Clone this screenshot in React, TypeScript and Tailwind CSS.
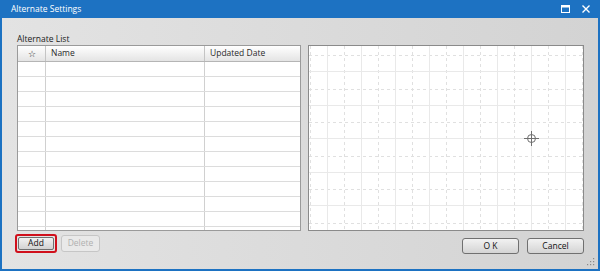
import React from "react";

const font = { fontFamily: '"Open Sans", "Noto Sans", Arial, sans-serif' };

function Grid() {
  const vSolid: number[] = [];
  const vDash: number[] = [];
  for (let x = 18; x < 274; x += 34) vSolid.push(x);
  for (let x = 1; x < 274; x += 34) vDash.push(x);
  const hSolid: number[] = [];
  const hDash: number[] = [];
  for (let y = 25; y < 184; y += 33.5) hSolid.push(y);
  for (let y = 9; y < 184; y += 33.5) hDash.push(y);
  return (
    <svg width="274" height="184" className="block">
      {vDash.map((x) => (
        <line key={"vd" + x} x1={x + 0.5} y1={0} x2={x + 0.5} y2={184} stroke="#e0e0e0" strokeDasharray="3 3" />
      ))}
      {hDash.map((y) => (
        <line key={"hd" + y} x1={0} y1={Math.round(y) + 0.5} x2={274} y2={Math.round(y) + 0.5} stroke="#e0e0e0" strokeDasharray="3 3" />
      ))}
      {vSolid.map((x) => (
        <line key={"vs" + x} x1={x + 0.5} y1={0} x2={x + 0.5} y2={184} stroke="#e9e9e9" />
      ))}
      {hSolid.map((y) => (
        <line key={"hs" + y} x1={0} y1={Math.round(y) + 0.5} x2={274} y2={Math.round(y) + 0.5} stroke="#e9e9e9" />
      ))}
      <g stroke="#6f6f6f" fill="none" strokeWidth="1">
        <circle cx={222.5} cy={92.5} r={4} />
        <line x1={215} y1={92.5} x2={230} y2={92.5} />
        <line x1={222.5} y1={85} x2={222.5} y2={100} />
      </g>
    </svg>
  );
}

export default function App() {
  const rows = Array.from({ length: 12 });
  return (
    <div className="w-[600px] h-[271px] flex flex-col bg-[#1d72c2] overflow-hidden" style={font}>
      <div className="h-[18px] flex items-center pl-[11px] pr-[6px] text-white text-[8.5px]">
        <span className="flex-1 leading-none">Alternate Settings</span>
        <svg width="9" height="8" className="mr-[12px]" viewBox="0 0 9 8">
          <rect x="0.5" y="0.5" width="8" height="7" fill="none" stroke="white" />
          <rect x="0" y="0" width="9" height="2.5" fill="white" />
        </svg>
        <svg width="8" height="8" className="mr-[4px]" viewBox="0 0 8 8">
          <path d="M0.5 0.5 L7.5 7.5 M7.5 0.5 L0.5 7.5" stroke="white" strokeWidth="1.4" />
        </svg>
      </div>
      <div className="flex-1 ml-[2px] mr-[2px] mb-[2px] relative flex pl-[15px] pt-[14px] bg-gradient-to-r from-[#e3e3e3] to-[#d3d3d3]">
        <div className="w-[284px] flex flex-col">
          <div className="h-[13px] text-[8.5px] text-[#1a1a1a] leading-[13px]">Alternate List</div>
          <div className="h-[186px] border border-[#9a9a9a] bg-white overflow-hidden flex flex-col">
            <div className="h-[16px] shrink-0 flex text-[8.5px] text-[#2a2a2a] bg-gradient-to-b from-[#ffffff] to-[#e4e4e4] border-b border-[#b5b5b5]">
              <div className="w-[28px] flex items-center justify-center border-r border-[#c4c4c4] text-[9px] text-[#222]">☆</div>
              <div className="w-[159px] flex items-center pl-[5px] border-r border-[#c4c4c4]">Name</div>
              <div className="flex-1 flex items-center pl-[5px]">Updated Date</div>
            </div>
            {rows.map((_, i) => (
              <div key={i} className="h-[15px] shrink-0 flex border-b border-[#dcdcdc]">
                <div className="w-[28px] border-r border-[#d0d0d0]" />
                <div className="w-[159px] border-r border-[#d0d0d0]" />
                <div className="flex-1" />
              </div>
            ))}
          </div>
          <div className="flex items-start mt-[3px] -ml-[2px] gap-[4px]">
            <div className="w-[42px] h-[19px] rounded-[3px] border-2 border-[#d0101c] p-[1px]">
              <div className="w-full h-full rounded-[2px] border border-[#707070] bg-gradient-to-b from-[#f2f2f2] to-[#d2d2d2] flex items-center justify-center text-[8.5px] text-[#111] leading-none">
                Add
              </div>
            </div>
            <div className="mt-[1px] w-[39px] h-[17px] rounded-[3px] border border-[#c6c6c6] bg-[#e9e9e9] flex items-center justify-center text-[8.5px] text-[#b0b0b0] leading-none">
              Delete
            </div>
          </div>
        </div>
        <div className="ml-[7px] w-[276px] flex flex-col pt-[13px]">
          <div className="h-[186px] border border-[#8a8a8a] bg-white overflow-hidden">
            <Grid />
          </div>
          <div className="flex justify-end gap-[8px] mt-[7px]">
            <div className="w-[57px] h-[16px] rounded-[3px] border border-[#707070] bg-gradient-to-b from-[#f2f2f2] to-[#d4d4d4] flex items-center justify-center text-[8.5px] text-[#111] leading-none">
              O K
            </div>
            <div className="w-[57px] h-[16px] rounded-[3px] border border-[#707070] bg-gradient-to-b from-[#f2f2f2] to-[#d4d4d4] flex items-center justify-center text-[8.5px] text-[#111] leading-none">
              Cancel
            </div>
          </div>
        </div>
        <svg width="8" height="8" className="absolute right-[3px] bottom-[3px]" viewBox="0 0 8 8">
          <g fill="#8a8a8a">
            <rect x="6" y="0" width="1.2" height="1.2" />
            <rect x="3" y="3" width="1.2" height="1.2" />
            <rect x="6" y="3" width="1.2" height="1.2" />
            <rect x="0" y="6" width="1.2" height="1.2" />
            <rect x="3" y="6" width="1.2" height="1.2" />
            <rect x="6" y="6" width="1.2" height="1.2" />
          </g>
        </svg>
      </div>
    </div>
  );
}
